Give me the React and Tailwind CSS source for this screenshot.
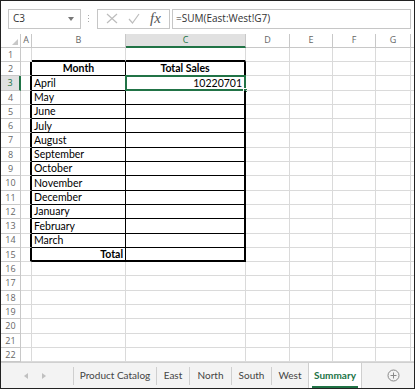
import React from "react";

const COLS = [
  { key: "A", w: "w-[11px]" },
  { key: "B", w: "w-[94px]" },
  { key: "C", w: "w-[120px]" },
  { key: "D", w: "w-[44px]" },
  { key: "E", w: "w-[43px]" },
  { key: "F", w: "w-[43px]" },
  { key: "G", w: "w-[35px]" },
];

const MONTHS = [
  "April", "May", "June", "July", "August", "September", "October",
  "November", "December", "January", "February", "March",
];

const TABS = [
  { name: "Product Catalog", w: "w-[83px]" },
  { name: "East", w: "w-[33px]" },
  { name: "North", w: "w-[42px]" },
  { name: "South", w: "w-[40px]" },
  { name: "West", w: "w-[37px]" },
];

const cellFont = { fontFamily: "Lato, 'Liberation Sans', sans-serif" };

function cellClass(row, col) {
  const inTable = row >= 2 && row <= 15;
  let cls = "border-r border-b border-[#dadada]";
  if (col === "A" && inTable) cls = "border-b border-[#dadada] border-r-2 border-r-black";
  if ((col === "B" || col === "C") && row === 1) cls = "border-r border-[#dadada] border-b-2 border-b-black";
  if (col === "B" && inTable) cls = row === 15 ? "border-r border-b-2 border-black" : "border-r border-b border-black";
  if (col === "C" && inTable) cls = row === 15 ? "border-r-2 border-b-2 border-black" : "border-r-2 border-b border-black";
  return cls;
}

function cellContent(row, col) {
  if (col === "B") {
    if (row === 2) return <span className="w-full text-center font-bold">Month</span>;
    if (row >= 3 && row <= 14) return <span className="pl-[2px]">{MONTHS[row - 3]}</span>;
    if (row === 15) return <span className="w-full text-right font-bold pr-[2px]">Total</span>;
  }
  if (col === "C") {
    if (row === 2) return <span className="w-full text-center font-bold">Total Sales</span>;
    if (row === 3) return <span className="w-full text-right pr-[2px]">10220701</span>;
  }
  return null;
}

function FormulaBar() {
  return (
    <div className="flex items-center h-[33px] pt-[3px] pl-[7px] pr-[3px]">
      <div className="flex items-center justify-between w-[73px] h-[20px] border border-[#c6c6c6] pl-[4px] pr-[6px]">
        <span className="text-[10px] text-[#333]">C3</span>
        <svg width="6" height="4" viewBox="0 0 6 4"><path d="M0 0h6L3 4z" fill="#777" /></svg>
      </div>
      <div className="flex flex-col gap-[2px] ml-[7px] mr-[8px]">
        <span className="w-[1px] h-[1px] bg-[#aaa]" />
        <span className="w-[1px] h-[1px] bg-[#aaa]" />
        <span className="w-[1px] h-[1px] bg-[#aaa]" />
      </div>
      <div className="flex items-center w-[73px] h-[20px] border border-[#c6c6c6] justify-around px-[3px]">
        <svg width="12" height="11" viewBox="0 0 12 11"><path d="M1 1l10 9M11 1L1 10" stroke="#bdbdbd" strokeWidth="1.2" /></svg>
        <svg width="12" height="11" viewBox="0 0 12 11"><path d="M1 6l3.5 4L11 1" stroke="#bdbdbd" strokeWidth="1.2" fill="none" /></svg>
        <span className="text-[15px] italic text-[#555] leading-none" style={{ fontFamily: "'Liberation Serif', serif" }}>fx</span>
      </div>
      <div className="flex items-center flex-1 h-[20px] border border-[#c6c6c6] ml-[2px] pl-[3px]">
        <span className="text-[10px] text-[#333]">=SUM(East:West!G7)</span>
      </div>
    </div>
  );
}

function HeaderRow() {
  return (
    <div className="flex h-[14px]">
      <div className="w-[20px] border-r border-b border-[#c8c8c8] flex items-end justify-end pr-[2px] pb-[2px]">
        <svg width="6" height="6" viewBox="0 0 6 6"><path d="M6 0v6H0z" fill="#c8c8c8" /></svg>
      </div>
      {COLS.map((c) =>
        c.key === "C" ? (
          <div key={c.key} className={`${c.w} bg-[#e1e1e1] border-r border-[#c8c8c8] border-b-2 border-b-[#217346] flex items-center justify-center text-[9px] text-[#217346]`}>
            {c.key}
          </div>
        ) : (
          <div key={c.key} className={`${c.w} border-r border-b border-[#c8c8c8] flex items-center justify-center text-[9px] text-[#666]`}>
            {c.key}
          </div>
        )
      )}
      <div className="flex-1 border-b border-[#c8c8c8]" />
    </div>
  );
}

function Row({ row }) {
  return (
    <div className="flex h-[14.3px]">
      {row === 3 ? (
        <div className="w-[20px] bg-[#e1e1e1] border-b border-[#c8c8c8] border-r-2 border-r-[#217346] flex items-center justify-center text-[9px] text-[#217346]">
          {row}
        </div>
      ) : (
        <div className="w-[20px] border-r border-b border-[#c8c8c8] flex items-center justify-center text-[9px] text-[#666]">
          {row}
        </div>
      )}
      {COLS.map((c) => (
        <div
          key={c.key}
          className={`${c.w} ${cellClass(row, c.key)} relative flex items-center text-[10.5px] text-black leading-none overflow-visible whitespace-nowrap`}
          style={cellFont}
        >
          {cellContent(row, c.key)}
          {row === 3 && c.key === "C" && (
            <>
              <div className="absolute -left-[1px] -top-[1px] right-[-2px] bottom-[-1px] border-2 border-[#217346]" />
              <div className="absolute right-[-4px] bottom-[-3px] w-[5px] h-[5px] bg-[#217346] border border-white" />
            </>
          )}
        </div>
      ))}
      <div className="flex-1 border-b border-[#dadada]" />
    </div>
  );
}

function TabBar() {
  return (
    <div className="flex items-center h-[26px] bg-[#f3f3f3] border-t border-[#d0d0d0] text-[10px] text-[#444] whitespace-nowrap" style={{ fontFamily: "Lato, 'Open Sans', sans-serif" }}>
      <div className="flex items-center gap-[14px] w-[72px] pl-[23px]">
        <svg width="4" height="6" viewBox="0 0 4 6"><path d="M4 0v6L0 3z" fill="#c0c0c0" /></svg>
        <svg width="4" height="6" viewBox="0 0 4 6"><path d="M0 0v6l4-3z" fill="#c0c0c0" /></svg>
      </div>
      <div className="flex items-center h-full">
        {TABS.map((t) => (
          <div key={t.name} className={`${t.w} flex items-center justify-center h-[18px] border-l border-[#cfcfcf]`}>
            {t.name}
          </div>
        ))}
        <div className="flex items-center justify-center w-[54px] h-full bg-white border-l border-r border-[#cfcfcf]">
          <span className="font-bold text-[#217346] border-b-2 border-[#217346] h-full flex items-center pt-[2px] px-[2px]">Summary</span>
        </div>
      </div>
      <div className="flex-1 flex justify-center pl-[10px]">
        <svg width="13" height="13" viewBox="0 0 13 13">
          <circle cx="6.5" cy="6.5" r="5.5" fill="none" stroke="#888" />
          <path d="M6.5 3.5v6M3.5 6.5h6" stroke="#888" />
        </svg>
      </div>
    </div>
  );
}

export default function App() {
  const rows = Array.from({ length: 22 }, (_, i) => i + 1);
  return (
    <div className="w-[415px] h-[389px] border border-[#222] bg-white overflow-hidden flex flex-col" style={{ fontFamily: "'Open Sans', sans-serif" }}>
      <FormulaBar />
      <HeaderRow />
      <div className="flex flex-col">
        {rows.map((r) => (
          <Row key={r} row={r} />
        ))}
      </div>
      <TabBar />
    </div>
  );
}
